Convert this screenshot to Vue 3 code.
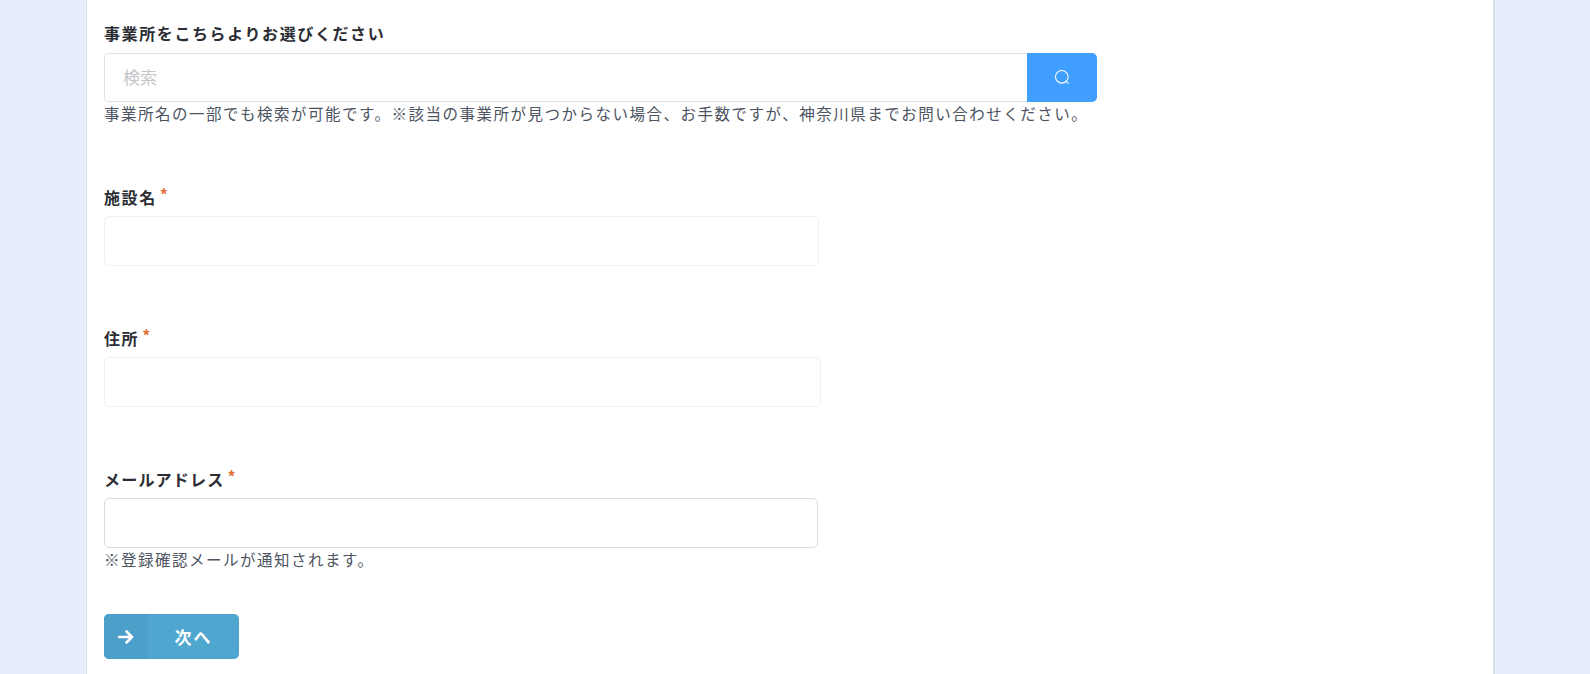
<template>
  <div class="page">
    <div class="card">
      <form class="entry-form" @submit.prevent>
        <div class="field search-field">
          <label class="label">事業所をこちらよりお選びください</label>
          <div class="search-box">
            <input class="search-input" type="text" placeholder="検索" />
            <button class="search-btn" type="button" aria-label="検索">
              <svg width="18" height="18" viewBox="0 0 18 18" fill="none" stroke="#fff" stroke-width="1.1" stroke-linecap="round">
                <circle cx="8.800" cy="8.800" r="6.300" />
                <path d="M13.400 13.400l1.700 1.700" />
              </svg>
            </button>
          </div>
          <p class="help">事業所名の一部でも検索が可能です。※該当の事業所が見つからない場合、お手数ですが、神奈川県までお問い合わせください。</p>
        </div>

        <div v-for="item in fields" :key="item.name" class="field" :class="item.cls">
          <label class="label">{{ item.name }}<span class="req">*</span></label>
          <input class="text-input" type="text" />
          <p v-if="item.help" class="help">{{ item.help }}</p>
        </div>

        <button class="next-btn" type="submit">
          <span class="next-icon">
            <svg width="18" height="16" viewBox="0 0 18 16" fill="none" stroke="#fff" stroke-width="2.6" stroke-linecap="round" stroke-linejoin="round">
              <path d="M2 8h13M9.500 2.500L15 8l-5.500 5.500" />
            </svg>
          </span>
          <span class="next-text">次へ</span>
        </button>
      </form>
    </div>
  </div>
</template>

<script setup>
const fields = [
  { name: '施設名', cls: 'facility' },
  { name: '住所', cls: 'address' },
  { name: 'メールアドレス', cls: 'email', help: '※登録確認メールが通知されます。' }
];
</script>

<style scoped>
.page {
  height: 674px;
  padding: 0 95px 0 86px;
  overflow: hidden;
  box-sizing: border-box;
}

.card {
  height: 100%;
  background: #fff;
  border-left: 1px solid #d9dfec;
  border-right: 2px solid #d9dfec;
  padding: 22px 16px 0 17px;
}

.entry-form {
  font-family: "Noto Sans CJK JP", "Noto Sans", sans-serif;
}

.field {
  margin-bottom: 61px;
}

.label {
  display: block;
  height: 22px;
  line-height: 22px;
  font-size: 16px;
  font-weight: 700;
  letter-spacing: 1.6px;
  color: #2b2d33;
  margin-bottom: 8px;
}

.search-field .label {
  margin-bottom: 9px;
}

.email .label {
  letter-spacing: 1.2px;
}

.req {
  color: #e0703a;
  font-size: 16px;
  position: relative;
  top: -3px;
  left: 3px;
  letter-spacing: 0;
}

.search-box {
  display: flex;
  width: 993px;
  height: 49px;
}

.search-input {
  flex: 1;
  min-width: 0;
  box-sizing: border-box;
  border: 1px solid #dfe1e6;
  border-right: none;
  border-radius: 5px 0 0 5px;
  padding: 0 18px 3px;
  font-family: inherit;
  font-size: 17px;
  outline: none;
}

.search-input::placeholder {
  color: #c4c6ca;
}

.search-btn {
  width: 70px;
  border: none;
  padding: 0 0 2px;
  background: #409eff;
  border-radius: 0 5px 5px 0;
  display: flex;
  align-items: center;
  justify-content: center;
}

.help {
  margin: 0;
  height: 22px;
  line-height: 22px;
  font-size: 15.500px;
  letter-spacing: 1.500px;
  color: #4d5461;
  white-space: nowrap;
}

.search-field {
  margin-bottom: 62px;
}

.text-input {
  display: block;
  box-sizing: border-box;
  height: 50px;
  border: 1px solid #f0f1f3;
  border-radius: 5px;
  background: #fff;
  outline: none;
}

.facility .text-input {
  width: 715px;
}

.address .text-input {
  width: 717px;
}

.email .text-input {
  width: 714px;
  border-color: #d9dbe0;
}

.email {
  margin-bottom: 44px;
}

.next-btn {
  display: flex;
  width: 135px;
  height: 45px;
  padding: 0;
  border: none;
  border-radius: 5px;
  overflow: hidden;
  background: #4fa6cf;
  color: #fff;
  font-family: inherit;
}

.next-icon {
  width: 44px;
  height: 100%;
  background: #4b9fc8;
  display: flex;
  align-items: center;
  justify-content: center;
}

.next-text {
  flex: 1;
  line-height: 45px;
  font-size: 17px;
  font-weight: 700;
  letter-spacing: 2px;
  text-align: center;
}
</style>

<style>
body {
  background: #e6eefe;
}
</style>
